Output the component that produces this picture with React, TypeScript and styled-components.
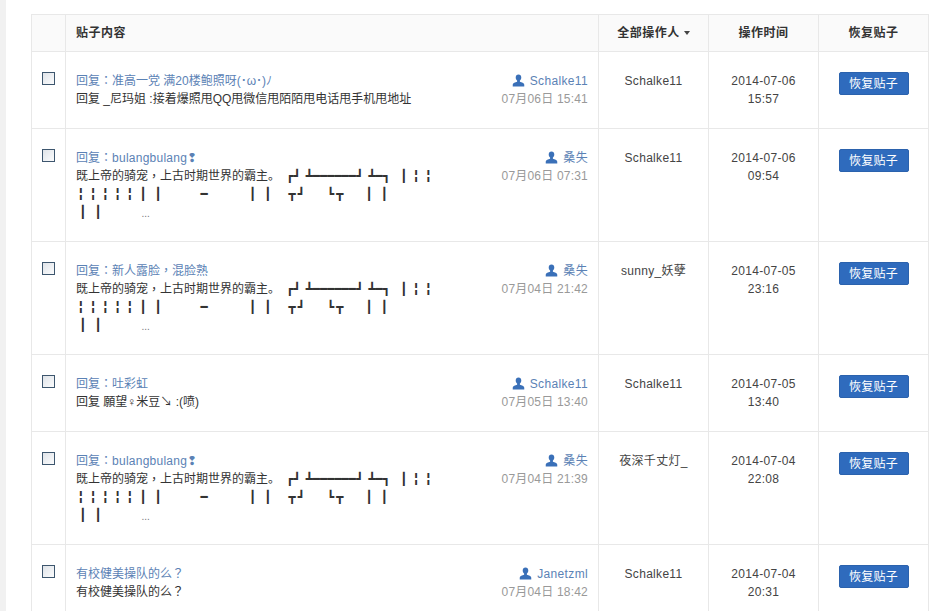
import React from "react";
import styled, { createGlobalStyle } from "styled-components";

const Global = createGlobalStyle`
  html, body { margin: 0; padding: 0; height: 100%; overflow: hidden; background: #fff; }
  body { font-family: "Liberation Sans", "Noto Sans CJK SC", sans-serif; font-size: 12px; color: #333; }
`;
const Page = styled.div`
  display: flex;
  height: 611px;
  overflow: hidden;
`;
const Strip = styled.div`
  width: 6px;
  flex: none;
  background: #f1f1f1;
`;
const Main = styled.main`
  flex: none;
  width: 897px;
  padding: 14px 0 0 25px;
`;
const Table = styled.table`
  width: 898px;
  table-layout: fixed;
  border-collapse: collapse;
  border: 1px solid #e8e8e8;
`;
const HeadCell = styled.th<{ $left?: boolean }>`
  height: 36px;
  padding: 0 10px;
  background: #fafafa;
  border: 1px solid #e8e8e8;
  font-size: 12px;
  line-height: 18px;
  font-weight: 700;
  color: #333;
  letter-spacing: 0.5px;
  text-align: ${(p) => (p.$left ? "left" : "center")};
`;
const Caret = styled.span`
  display: inline-block;
  margin-left: 4px;
  vertical-align: 2px;
  border-left: 3px solid transparent;
  border-right: 3px solid transparent;
  border-top: 4px solid #444;
`;
const Cell = styled.td<{ $center?: boolean }>`
  padding: 20px 10px;
  border: 1px solid #e8e8e8;
  vertical-align: top;
  line-height: 18px;
  color: #444;
  text-align: ${(p) => (p.$center ? "center" : "left")};
`;
const CheckCell = styled.td`
  padding: 20px 0 0 10px;
  border: 1px solid #e8e8e8;
  vertical-align: top;
`;
const Check = styled.input.attrs({ type: "checkbox" })`
  appearance: none;
  display: block;
  margin: 0;
  width: 13px;
  height: 13px;
  border: 1px solid #3d566e;
  background: linear-gradient(135deg, #dfe3e8, #fbfcfd);
`;
const PostRow = styled.div`
  display: flex;
  justify-content: space-between;
  gap: 12px;
`;
const Body = styled.div`
  flex: 1;
  min-width: 0;
`;
const Title = styled.a`
  display: block;
  color: #5b82b5;
  white-space: nowrap;
`;
const Latin = styled.span`
  letter-spacing: 0.25px;
`;
const Punct = styled.span`
  font-family: "Noto Sans CJK TC", sans-serif;
  line-height: 0;
`;
const Text = styled.div`
  color: #333;
  white-space: nowrap;
`;
const ArtLine = styled.div`
  display: flex;
  align-items: center;
  height: 18px;
  white-space: nowrap;
`;
const Art = styled.span<{ $at?: number; $gap?: number }>`
  margin-left: ${(p) => p.$at ?? 0}px;
  letter-spacing: ${(p) => p.$gap ?? 0}px;
  font-family: "DejaVu Sans Mono", monospace;
  font-weight: 700;
  font-size: 12px;
  line-height: 18px;
  white-space: pre;
  color: #333;
`;
const Dots = styled.span`
  margin-left: 32px;
  margin-top: 3px;
  color: #777;
  font-size: 10px;
`;
const Meta = styled.div`
  flex: none;
  text-align: right;
`;
const Author = styled.a`
  display: flex;
  align-items: center;
  justify-content: flex-end;
  gap: 5px;
  color: #5b82b5;
  letter-spacing: 0.35px;
`;
const UserIcon = styled.svg`
  width: 13px;
  height: 13px;
  fill: #3a70b8;
  margin-top: -2px;
`;
const Stamp = styled.div`
  color: #999;
  letter-spacing: 0.2px;
`;
const Wide = styled.span`
  letter-spacing: 0.3px;
`;
const Restore = styled.button`
  display: block;
  margin: 0 auto;
  width: 70px;
  height: 23px;
  padding: 0;
  border: 1px solid #2b62ad;
  border-radius: 2px;
  background: #2f6bbd;
  color: #fff;
  font: inherit;
  letter-spacing: 0.2px;
`;

type Post = {
  title: React.ReactNode;
  art?: boolean;
  text?: React.ReactNode;
  author: string;
  stamp: string;
  op: string;
  date: string;
  time: string;
};
const Reply = () => (
  <>
    回复<Punct>：</Punct>
  </>
);
const Bulang = () => (
  <>
    <Reply />
    <Latin>bulangbulang</Latin>❢
  </>
);
const posts: Post[] = [
  { title: <><Reply />准高一党 满20楼鲍照呀(･ω･)ﾉ</>, text: "回复 _尼玛姐 :接着爆照甩QQ甩微信甩陌陌甩电话甩手机甩地址", author: "Schalke11", stamp: "07月06日 15:41", op: "Schalke11", date: "2014-07-06", time: "15:57" },
  { title: <Bulang />, art: true, author: "桑失", stamp: "07月06日 07:31", op: "Schalke11", date: "2014-07-06", time: "09:54" },
  { title: <><Reply />新人露脸<Punct>，</Punct>混脸熟</>, art: true, author: "桑失", stamp: "07月04日 21:42", op: "sunny_妖孽", date: "2014-07-05", time: "23:16" },
  { title: <><Reply />吐彩虹</>, text: "回复 願望♀米豆↘ :(喷)", author: "Schalke11", stamp: "07月05日 13:40", op: "Schalke11", date: "2014-07-05", time: "13:40" },
  { title: <Bulang />, art: true, author: "桑失", stamp: "07月04日 21:39", op: "夜深千丈灯_", date: "2014-07-04", time: "22:08" },
  { title: <>有校健美操队的么<Punct>？</Punct></>, text: <>有校健美操队的么<Punct>？</Punct></>, author: "Janetzml", stamp: "07月04日 18:42", op: "Schalke11", date: "2014-07-04", time: "20:31" },
];

const User = () => (
  <UserIcon viewBox="0 0 14 14">
    <path d="M7 0.5c-1.9 0-3 1.4-3 3.3 0 1.4.6 2.7 1.5 3.3v1.3C3.5 9 1 9.700.8 11.300V13.500h12.400v-2.200C13 9.700 10.500 9 8.500 8.400V7.100C9.400 6.500 10 5.200 10 3.800 10 1.900 8.900.5 7 .5z" />
  </UserIcon>
);

const ArtBody = () => (
  <Text>
    <ArtLine>
      既上帝的骑宠<Punct>，</Punct>上古时期世界的霸主。
      <Art $at={6}>┏┛</Art>
      <Art $at={5}>┻━━━━━━┛</Art>
      <Art $at={5}>┻━┓</Art>
      <Art $at={10} $gap={5}>┃╏╏</Art>
    </ArtLine>
    <ArtLine>
      <Art $at={1} $gap={5}>╏╏╏╏╏</Art>
      <Art $at={1} $gap={8}>┃┃</Art>
      <Art $at={31}>━</Art>
      <Art $at={41} $gap={8}>┃┃</Art>
      <Art $at={9} $gap={2}>┳┛</Art>
      <Art $at={20} $gap={2}>┗┳</Art>
      <Art $at={20} $gap={8}>┃┃</Art>
    </ArtLine>
    <ArtLine>
      <Art $at={3} $gap={8}>┃┃</Art>
      <Dots>...</Dots>
    </ArtLine>
  </Text>
);

export default function App() {
  return (
    <Page>
      <Global />
      <Strip />
      <Main>
        <Table>
          <colgroup>
            <col width={34} />
            <col width={533} />
            <col width={110} />
            <col width={110} />
            <col width={110} />
          </colgroup>
          <thead>
            <tr>
              <HeadCell />
              <HeadCell $left>贴子内容</HeadCell>
              <HeadCell>
                全部操作人
                <Caret />
              </HeadCell>
              <HeadCell>操作时间</HeadCell>
              <HeadCell>恢复贴子</HeadCell>
            </tr>
          </thead>
          <tbody>
            {posts.map((p, i) => (
              <tr key={i}>
                <CheckCell>
                  <Check />
                </CheckCell>
                <Cell>
                  <PostRow>
                    <Body>
                      <Title>{p.title}</Title>
                      {p.art ? <ArtBody /> : <Text>{p.text}</Text>}
                    </Body>
                    <Meta>
                      <Author>
                        <User />
                        {p.author}
                      </Author>
                      <Stamp>{p.stamp}</Stamp>
                    </Meta>
                  </PostRow>
                </Cell>
                <Cell $center>
                  <Wide>{p.op}</Wide>
                </Cell>
                <Cell $center>
                  <Wide>
                    {p.date}
                    <br />
                    {p.time}
                  </Wide>
                </Cell>
                <Cell $center>
                  <Restore>恢复贴子</Restore>
                </Cell>
              </tr>
            ))}
          </tbody>
        </Table>
      </Main>
    </Page>
  );
}
